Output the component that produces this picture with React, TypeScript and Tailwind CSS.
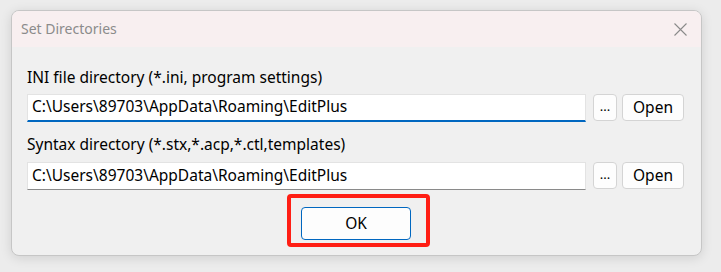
const font = { fontFamily: '"Noto Sans", "Open Sans", sans-serif' };

const PathRow = ({ value, focused }: { value: string; focused?: boolean }) => (
  <div className="flex items-start">
    <div
      className={
        "w-[559px] h-[28px] bg-white pl-[4px] flex items-center text-[15.5px] text-black border border-[#e3e3e3] " +
        (focused ? "border-b-2 border-b-[#0067c0]" : "border-b border-b-[#8a8a8a]")
      }
    >
      <span className="leading-none -mt-[1px]">{value}</span>
    </div>
    <button
      type="button"
      className="ml-[7px] w-[24px] h-[27px] bg-[#fdfdfd] border border-[#d4d4d4] rounded-[4px] text-[13px] text-black leading-none flex items-end justify-center pb-[7px]"
    >
      ...
    </button>
    <button
      type="button"
      className="ml-[5px] w-[62px] h-[27px] bg-[#fdfdfd] border border-[#d4d4d4] rounded-[4px] text-[15.5px] text-black leading-none flex items-center justify-center"
    >
      Open
    </button>
  </div>
);

export default function App() {
  return (
    <div className="w-[721px] h-[272px] bg-[#ececec] pl-[11px] pt-[10px]" style={font}>
      <div className="w-[691px] h-[246px] rounded-[8px] border border-[#c6c6c6] bg-[#f0f0f0] overflow-hidden shadow-[0_2px_12px_rgba(0,0,0,0.12)]">
        <div className="h-[36px] bg-[#f8eff0] flex items-center justify-between pl-[9px] pr-[14px]">
          <span className="text-[14px] text-[#8b8b8b] leading-none">Set Directories</span>
          <svg width="13" height="13" viewBox="0 0 13 13" className="mt-[1px]">
            <path d="M0.5 0.5 L12.5 12.5 M12.5 0.5 L0.5 12.5" stroke="#8a8a8a" strokeWidth="1.1" />
          </svg>
        </div>
        <div className="pl-[15px] pt-[20px]">
          <div className="text-[15.5px] leading-[20px] text-black">INI file directory (*.ini, program settings)</div>
          <div className="mt-[7px]">
            <PathRow value="C:\Users\89703\AppData\Roaming\EditPlus" focused />
          </div>
          <div className="mt-[12px] text-[15.5px] leading-[20px] text-black">
            Syntax directory (*.stx,*.acp,*.ctl,templates)
          </div>
          <div className="mt-[8px]">
            <PathRow value="C:\Users\89703\AppData\Roaming\EditPlus" />
          </div>
          <div className="mt-[4px] ml-[260px] w-[143px] h-[53px] border-[4px] border-[#ff1e14] rounded-[4px] pl-[10px] pt-[9px]">
            <button
              type="button"
              className="w-[110px] h-[33px] bg-[#fdfdfd] border border-[#0067c0] rounded-[4px] text-[15.5px] text-black leading-none flex items-center justify-center"
            >
              OK
            </button>
          </div>
        </div>
      </div>
    </div>
  );
}
